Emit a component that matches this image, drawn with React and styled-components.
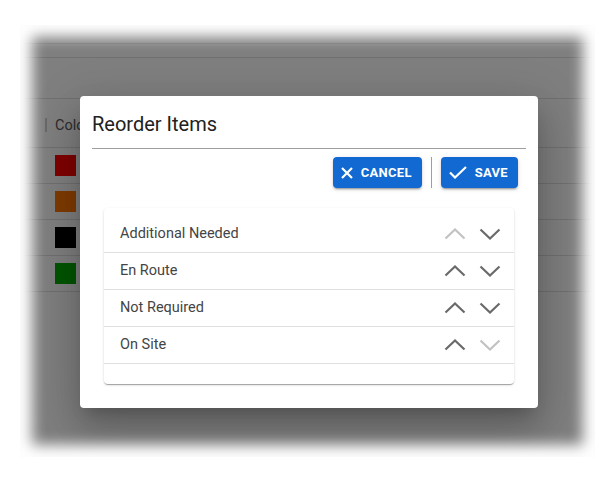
import React from "react";
import styled, { createGlobalStyle } from "styled-components";

const Global = createGlobalStyle`
  body {
    margin: 0;
    background: #fff;
    font-family: Roboto, "Liberation Sans", Arial, sans-serif;
  }
`;

// whole window
const Screen = styled.div`
  width: 612px;
  height: 485px;
  padding: 25px 17px 28px 20px;
  box-sizing: border-box;
  overflow: hidden;
`;

// page behind the dialog, faded out at the edges
const Frame = styled.div`
  position: relative;
  width: 575px;
  height: 432px;
  background: #fff;
  overflow: hidden;

  &::after {
    content: "";
    position: absolute;
    inset: 0;
    box-shadow: inset 0 0 14px 12px #fff;
    pointer-events: none;
    z-index: 3;
  }
`;

const Bar = styled.div`
  height: ${(p) => p.h}px;
  border-bottom: 1px solid #e0e0e0;
`;

const HeadRow = styled.div`
  display: flex;
  align-items: center;
  height: 48px;
  border-bottom: 1px solid #e0e0e0;
  padding-left: 25px;
`;

const HeadSep = styled.span`
  width: 2px;
  height: 14px;
  background: #d0d0d0;
  margin-right: 8px;
  margin-top: 4px;
`;

const HeadText = styled.span`
  font-size: 14.5px;
  color: #5a5a5a;
  margin-top: 4px;
`;

const TableRow = styled.div`
  display: flex;
  align-items: center;
  height: 35px;
  border-bottom: 1px solid #e0e0e0;
  padding-left: 35px;
`;

const Swatch = styled.span`
  width: 21px;
  height: 21px;
  background: ${(p) => p.color};
`;

const Overlay = styled.div`
  position: absolute;
  inset: 0;
  background: rgba(0, 0, 0, 0.5);
  display: flex;
  align-items: flex-start;
  padding: 71px 0 0 60px;
  z-index: 2;
`;

const Dialog = styled.div`
  width: 458px;
  background: #fff;
  border-radius: 4px;
  padding: 0 12px 24px;
  box-sizing: border-box;
  box-shadow: 0 11px 15px -7px rgba(0, 0, 0, 0.2),
    0 24px 38px 3px rgba(0, 0, 0, 0.14), 0 9px 46px 8px rgba(0, 0, 0, 0.12);
`;

const Title = styled.h2`
  margin: 0;
  padding: 12px 0 8px;
  font-size: 20px;
  line-height: 32px;
  font-weight: 400;
  color: #212121;
  border-bottom: 1px solid #9e9e9e;
`;

const Actions = styled.div`
  display: flex;
  justify-content: flex-end;
  align-items: stretch;
  gap: 8px;
  margin-top: 8px;
  padding-right: 8px;
  height: 31px;
`;

const VSep = styled.span`
  width: 1px;
  background: #9e9e9e;
  margin: 0 1px;
`;

const Button = styled.button`
  display: flex;
  align-items: center;
  gap: ${(p) => p.gap}px;
  padding: 0 ${(p) => p.pr}px 0 8px;
  border: 0;
  border-radius: 4px;
  background: #1169d1;
  color: #fff;
  font-family: Roboto, "Liberation Sans", Arial, sans-serif;
  font-size: 13px;
  font-weight: 700;
  letter-spacing: 0.3px;
  box-shadow: 0 3px 1px -2px rgba(0, 0, 0, 0.2), 0 2px 2px 0 rgba(0, 0, 0, 0.14),
    0 1px 5px 0 rgba(0, 0, 0, 0.12);
  cursor: pointer;

  svg {
    display: block;
  }
`;

const Card = styled.div`
  margin: 20px 12px 0;
  padding: 8px 0 20px;
  border-radius: 4px;
  background: #fff;
  box-shadow: 0 2px 1px -1px rgba(0, 0, 0, 0.2), 0 1px 1px 0 rgba(0, 0, 0, 0.14),
    0 1px 3px 0 rgba(0, 0, 0, 0.12);
`;

const Item = styled.div`
  display: flex;
  align-items: center;
  height: 36px;
  padding: 0 7px 0 16px;
  border-bottom: 1px solid #e0e0e0;
`;

const Label = styled.span`
  flex: 1;
  font-size: 14.5px;
  color: #444;
  margin-top: -1px;
`;

const Arrow = styled.button`
  width: 35px;
  height: 36px;
  display: flex;
  align-items: center;
  justify-content: center;
  padding: 0;
  border: 0;
  background: none;
  color: ${(p) => (p.disabled ? "#c2c2c2" : "#6a6a6a")};
  cursor: ${(p) => (p.disabled ? "default" : "pointer")};
`;

const Chevron = ({ up }) => (
  <svg width="22" height="12" viewBox="0 0 22 12">
    <polyline
      points={up ? "1.5,10.5 11,1.5 20.5,10.5" : "1.5,1.5 11,10.5 20.5,1.5"}
      fill="none"
      stroke="currentColor"
      strokeWidth="2.2"
    />
  </svg>
);

const CloseIcon = () => (
  <svg width="12" height="12" viewBox="0 0 12 12">
    <path d="M1 1L11 11M11 1L1 11" stroke="#fff" strokeWidth="2.2" />
  </svg>
);

const CheckIcon = () => (
  <svg width="18" height="13" viewBox="0 0 18 13">
    <polyline points="1,6.5 6,11.5 17,1" fill="none" stroke="#fff" strokeWidth="2.2" />
  </svg>
);

const swatches = ["#ff0000", "#ff7700", "#000000", "#00aa00"];
const items = ["Additional Needed", "En Route", "Not Required", "On Site"];

export default function App() {
  return (
    <Screen>
      <Global />
      <Frame>
        <Bar h={18} />
        <Bar h={13} />
        <Bar h={40} />
        <HeadRow>
          <HeadSep />
          <HeadText>Color</HeadText>
        </HeadRow>
        {swatches.map((c) => (
          <TableRow key={c}>
            <Swatch color={c} />
          </TableRow>
        ))}
        <Overlay>
          <Dialog>
            <Title>Reorder Items</Title>
            <Actions>
              <Button gap={8} pr={10}>
                <CloseIcon />
                CANCEL
              </Button>
              <VSep />
              <Button gap={8} pr={10}>
                <CheckIcon />
                SAVE
              </Button>
            </Actions>
            <Card>
              {items.map((name, i) => (
                <Item key={name}>
                  <Label>{name}</Label>
                  <Arrow disabled={i === 0}>
                    <Chevron up />
                  </Arrow>
                  <Arrow disabled={i === items.length - 1}>
                    <Chevron />
                  </Arrow>
                </Item>
              ))}
            </Card>
          </Dialog>
        </Overlay>
      </Frame>
    </Screen>
  );
}
